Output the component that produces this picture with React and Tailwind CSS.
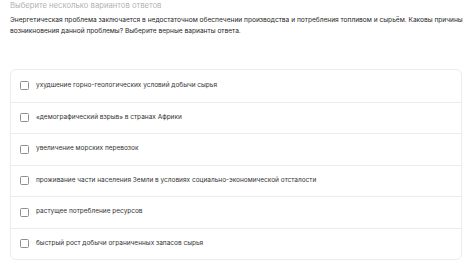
import React from 'react';

const options = [
  'ухудшение горно-геологических условий добычи сырья',
  '«демографический взрыв» в странах Африки',
  'увеличение морских перевозок',
  'проживание части населения Земли в условиях социально-экономической отсталости',
  'растущее потребление ресурсов',
  'быстрый рост добычи ограниченных запасов сырья',
];

const App = () => {
  return (
    <div className="w-[474px] h-[262px] overflow-hidden bg-white px-[10px]" style={{ fontFamily: 'Inter, "Noto Sans", sans-serif' }}>
      <p className="text-[7.7px] leading-[10px] text-[#b3b3b3] pt-[1px]">Выберите несколько вариантов ответов</p>
      <p className="mt-[4px] w-[458px] text-[6.6px] leading-[11px] text-[#1f1f1f]">
        Энергетическая проблема заключается в недостаточном обеспечении производства и потребления топливом и сырьём. Каковы причины возникновения данной проблемы? Выберите верные варианты ответа.
      </p>
      <div className="mt-[32px] w-[452px] rounded-[6px] border border-[#ececec] overflow-hidden">
        {options.map((o, i) => (
          <div
            key={i}
            className={`flex items-center h-[31.5px] pl-[9px] ${i > 0 ? 'border-t border-[#ececec]' : ''}`}
          >
            <span className="w-[9px] h-[9px] rounded-[1.5px] border border-[#8f8f8f] shrink-0" />
            <span className="ml-[7px] text-[6.5px] text-[#333]">{o}</span>
          </div>
        ))}
      </div>
    </div>
  );
};

export default App;
